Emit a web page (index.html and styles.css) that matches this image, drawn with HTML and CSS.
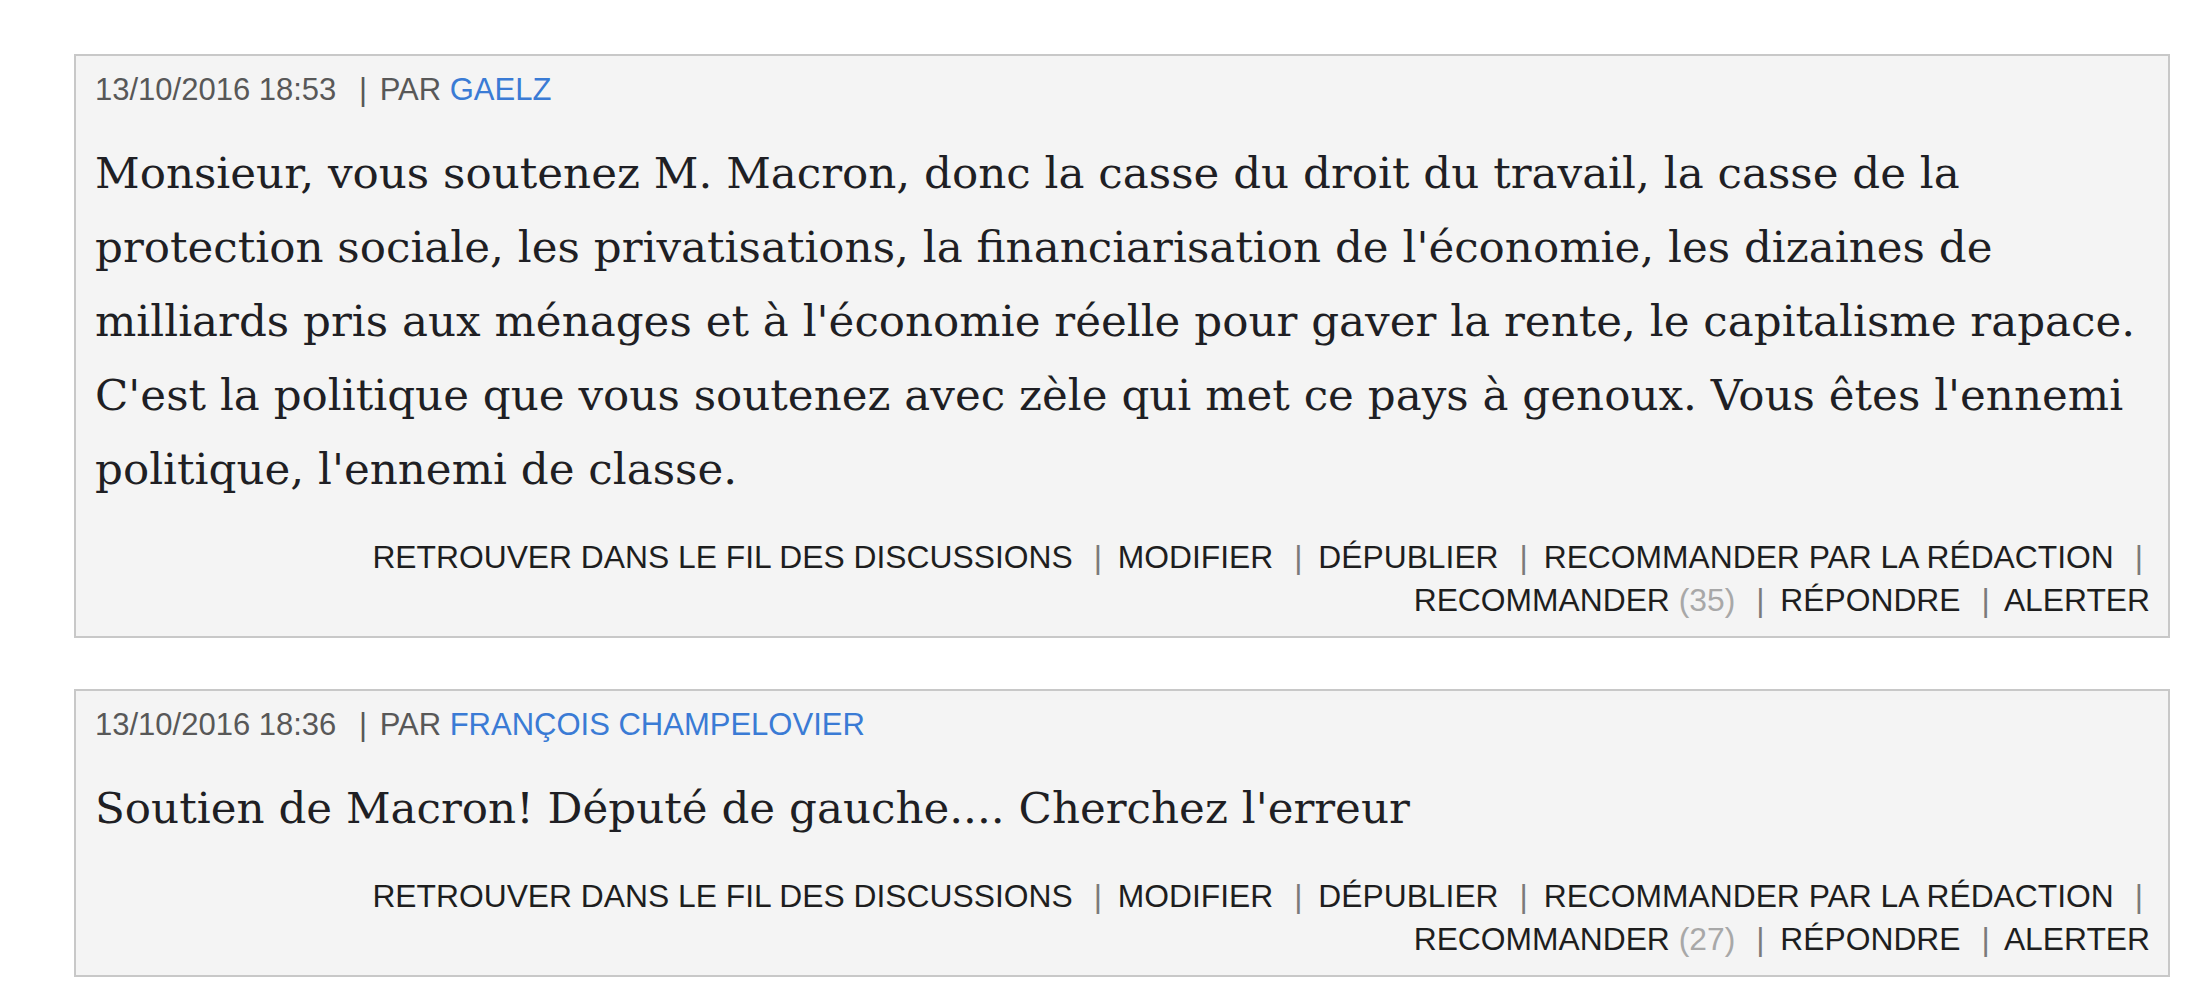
FILE: index.html
```html
<!DOCTYPE html>
<html lang="fr">
  <head>
    <meta charset="UTF-8" />
    <meta name="viewport" content="width=device-width, initial-scale=1.0" />
    <title>Commentaires</title>
    <link rel="stylesheet" href="styles.css">
  </head>
  <body>
    <!-- liste des commentaires -->
    <ul class="comment-list">
      <li class="comment">
        <div class="comment-meta">
          13/10/2016 18:53 <span class="sep">|</span> PAR <a href="#" class="author">GAELZ</a>
        </div>
        <p class="comment-body">Monsieur, vous soutenez M. Macron, donc la casse du droit du travail, la casse de la protection sociale, les privatisations, la financiarisation de l'économie, les dizaines de milliards pris aux ménages et à l'économie réelle pour gaver la rente, le capitalisme rapace. C'est la politique que vous soutenez avec zèle qui met ce pays à genoux. Vous êtes l'ennemi politique, l'ennemi de classe.</p>
        <div class="comment-actions">
          <span class="item"><a href="#">Retrouver dans le fil des discussions</a><span class="sep">|</span></span>
          <span class="item"><a href="#">Modifier</a><span class="sep">|</span></span>
          <span class="item"><a href="#">Dépublier</a><span class="sep">|</span></span>
          <span class="item"><a href="#">Recommander par la rédaction</a><span class="sep">|</span></span>
          <span class="item"><a href="#">Recommander <span class="count">(35)</span></a><span class="sep">|</span></span>
          <span class="item"><a href="#">Répondre</a><span class="sep">|</span></span>
          <span class="item"><a href="#">Alerter</a></span>
        </div>
      </li>

      <li class="comment">
        <div class="comment-meta">
          13/10/2016 18:36 <span class="sep">|</span> PAR <a href="#" class="author">FRANÇOIS CHAMPELOVIER</a>
        </div>
        <p class="comment-body">Soutien de Macron! Député de gauche.... Cherchez l'erreur</p>
        <div class="comment-actions">
          <span class="item"><a href="#">Retrouver dans le fil des discussions</a><span class="sep">|</span></span>
          <span class="item"><a href="#">Modifier</a><span class="sep">|</span></span>
          <span class="item"><a href="#">Dépublier</a><span class="sep">|</span></span>
          <span class="item"><a href="#">Recommander par la rédaction</a><span class="sep">|</span></span>
          <span class="item"><a href="#">Recommander <span class="count">(27)</span></a><span class="sep">|</span></span>
          <span class="item"><a href="#">Répondre</a><span class="sep">|</span></span>
          <span class="item"><a href="#">Alerter</a></span>
        </div>
      </li>
    </ul>
  </body>
</html>
```

FILE: styles.css
```css
body {
  margin: 54px 30px 0 74px;
  background: #fff;
  color: #222;
}

.comment-list {
  list-style: none;
  margin: 0;
  padding: 0;
}

.comment {
  border: 2px solid #c8c8c8;
  background: #f4f4f4;
  padding: 16px 18px 14px 19px;
  margin-bottom: 51px;
}

.comment-meta {
  font-family: "Liberation Sans", Arial, sans-serif;
  font-size: 31px;
  line-height: 36px;
  color: #585858;
}

.comment-meta .sep {
  margin: 0 4px 0 14px;
}

.author {
  color: #3a7bd5;
  text-decoration: none;
}

.comment-body {
  font-family: "DejaVu Serif", Georgia, serif;
  font-size: 43.6px;
  line-height: 74px;
  color: #1f1f24;
  margin: 28px 0 0;
}

.comment-actions {
  font-family: "Liberation Sans", Arial, sans-serif;
  font-size: 31.8px;
  line-height: 43px;
  text-align: right;
  text-transform: uppercase;
  margin-top: 30px;
}

.comment-actions .item {
  white-space: nowrap;
}

.comment-actions a {
  color: #1e1e1e;
  text-decoration: none;
}

.comment-actions .sep {
  color: #7a7a7a;
  margin: 0 7px 0 21px;
}

.count {
  color: #a8a8a8;
}
```
